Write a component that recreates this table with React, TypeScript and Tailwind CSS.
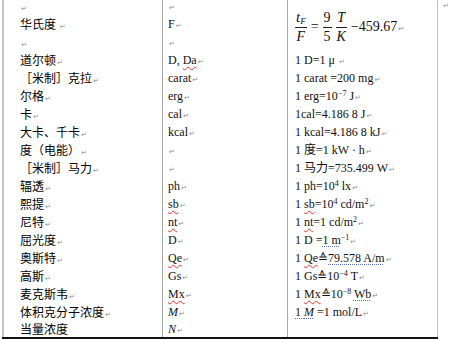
import type { ReactNode } from "react";

const Mark = () => (
  <span className="ml-px font-['DejaVu_Sans'] text-[7px] text-[#8c8c8c]">↵</span>
);

const Wavy = ({ children }: { children: ReactNode }) => (
  <span className="underline decoration-wavy decoration-[#e23a2c] decoration-1 underline-offset-[2px]">
    {children}
  </span>
);

const Dotted = ({ children }: { children: ReactNode }) => (
  <span className="underline decoration-dotted decoration-[#5b6fb8] decoration-1 underline-offset-[2px]">
    {children}
  </span>
);

const Sup = ({ children }: { children: ReactNode }) => (
  <sup className="text-[8px]">{children}</sup>
);

const Frac = ({ top, bottom }: { top: ReactNode; bottom: ReactNode }) => (
  <span className="inline-flex flex-col items-center leading-none">
    <span className="px-px pb-[2px]">{top}</span>
    <span className="h-px w-full bg-[#222]" />
    <span className="px-px pt-[2px]">{bottom}</span>
  </span>
);

const units: ReactNode[] = [
  <Mark />,
  <>华氏度 <Mark /></>,
  <Mark />,
  <>道尔顿<Mark /></>,
  <>［米制］克拉<Mark /></>,
  <>尔格<Mark /></>,
  <>卡<Mark /></>,
  <>大卡、千卡<Mark /></>,
  <>度（电能）<Mark /></>,
  <>［米制］马力<Mark /></>,
  <>辐透<Mark /></>,
  <>熙提<Mark /></>,
  <>尼特<Mark /></>,
  <>屈光度<Mark /></>,
  <>奥斯特<Mark /></>,
  <>高斯<Mark /></>,
  <>麦克斯韦<Mark /></>,
  <>体积克分子浓度<Mark /></>,
  <>当量浓度</>,
];

const symbols: ReactNode[] = [
  <Mark />,
  <>F<Mark /></>,
  <Mark />,
  <>D, <Wavy>Da</Wavy><Mark /></>,
  <>carat<Mark /></>,
  <>erg<Mark /></>,
  <>cal<Mark /></>,
  <>kcal<Mark /></>,
  <Mark />,
  <Mark />,
  <>ph<Mark /></>,
  <><Wavy>sb</Wavy><Mark /></>,
  <><Wavy>nt</Wavy><Mark /></>,
  <>D<Mark /></>,
  <><Wavy>Qe</Wavy><Mark /></>,
  <>Gs<Mark /></>,
  <><Wavy>Mx</Wavy><Mark /></>,
  <><i>M</i><Mark /></>,
  <><i>N</i><Mark /></>,
];

const relations: ReactNode[] = [
  <>1 D=1 μ <Mark /></>,
  <>1 carat =200 mg<Mark /></>,
  <>1 erg=10<Sup>−7</Sup> J<Mark /></>,
  <>1cal=4.186 8 J<Mark /></>,
  <>1 kcal=4.186 8 kJ<Mark /></>,
  <>1 度=1 kW · h<Mark /></>,
  <>1 马力=735.499 W<Mark /></>,
  <>1 ph=10<Sup>4</Sup> lx<Mark /></>,
  <>1 <Wavy>sb</Wavy>=10<Sup>4</Sup> cd/m<Sup>2</Sup><Mark /></>,
  <>1 <Wavy>nt</Wavy>=1 cd/m<Sup>2</Sup><Mark /></>,
  <>1 D =<Dotted>1 m</Dotted><Sup>−1</Sup><Mark /></>,
  <>1 <Wavy>Qe</Wavy>≙<Dotted>79.578 A/m</Dotted><Mark /></>,
  <>1 Gs≙10<Sup>−4</Sup> T<Mark /></>,
  <>1 <Wavy>Mx</Wavy>≙10<Sup>−8</Sup> <Dotted>Wb</Dotted><Mark /></>,
  <><Dotted>1 <i>M</i></Dotted> =1 mol/L<Mark /></>,
  <></>,
];

function Cell({ children, last }: { children: ReactNode; last?: boolean }) {
  return (
    <div className={`flex items-center whitespace-pre leading-none ${last ? "h-[16px]" : "h-[18px]"}`}>
      <span>{children}</span>
    </div>
  );
}

export default function App() {
  const serif = "font-['Liberation_Serif','Noto_Sans_CJK_SC',serif] text-[12px] text-[#111]";

  return (
    <div className="h-[340px] w-[450px] overflow-hidden bg-white">
      <div className="-mt-[3px] flex items-start pl-[2px]">
        <div className="flex border-b-2 border-[#111]">
          <div className="w-[161px] border-l-2 border-r border-l-[#c4c4c4] border-r-[#a9a9a9] pl-[16px] font-['Noto_Sans_CJK_SC',sans-serif] text-[12px] text-black">
            {units.map((u, i) => (
              <Cell key={i} last={i === units.length - 1}>{u}</Cell>
            ))}
          </div>
          <div className={`w-[125px] border-r border-[#a9a9a9] pl-[5px] ${serif}`}>
            {symbols.map((s, i) => (
              <Cell key={i} last={i === symbols.length - 1}>{s}</Cell>
            ))}
          </div>
          <div className={`w-[150px] border-r border-[#bdbdbd] pl-[7px] ${serif}`}>
            <div className="flex h-[54px] items-center gap-[4px] pt-[6px] text-[14px] leading-none">
              <Frac
                top={<><i className="text-[15px]">t</i><sub className="text-[9px] italic">F</sub></>}
                bottom={<i>F</i>}
              />
              <span>=</span>
              <Frac top="9" bottom="5" />
              <Frac top={<i>T</i>} bottom={<i>K</i>} />
              <span className="text-[14px]">−459.67<Mark /></span>
            </div>
            {relations.map((r, i) => (
              <Cell key={i} last={i === relations.length - 1}>{r}</Cell>
            ))}
          </div>
        </div>
        <div className="flex h-[18px] items-center pl-[4px]">
          <Mark />
        </div>
      </div>
    </div>
  );
}
